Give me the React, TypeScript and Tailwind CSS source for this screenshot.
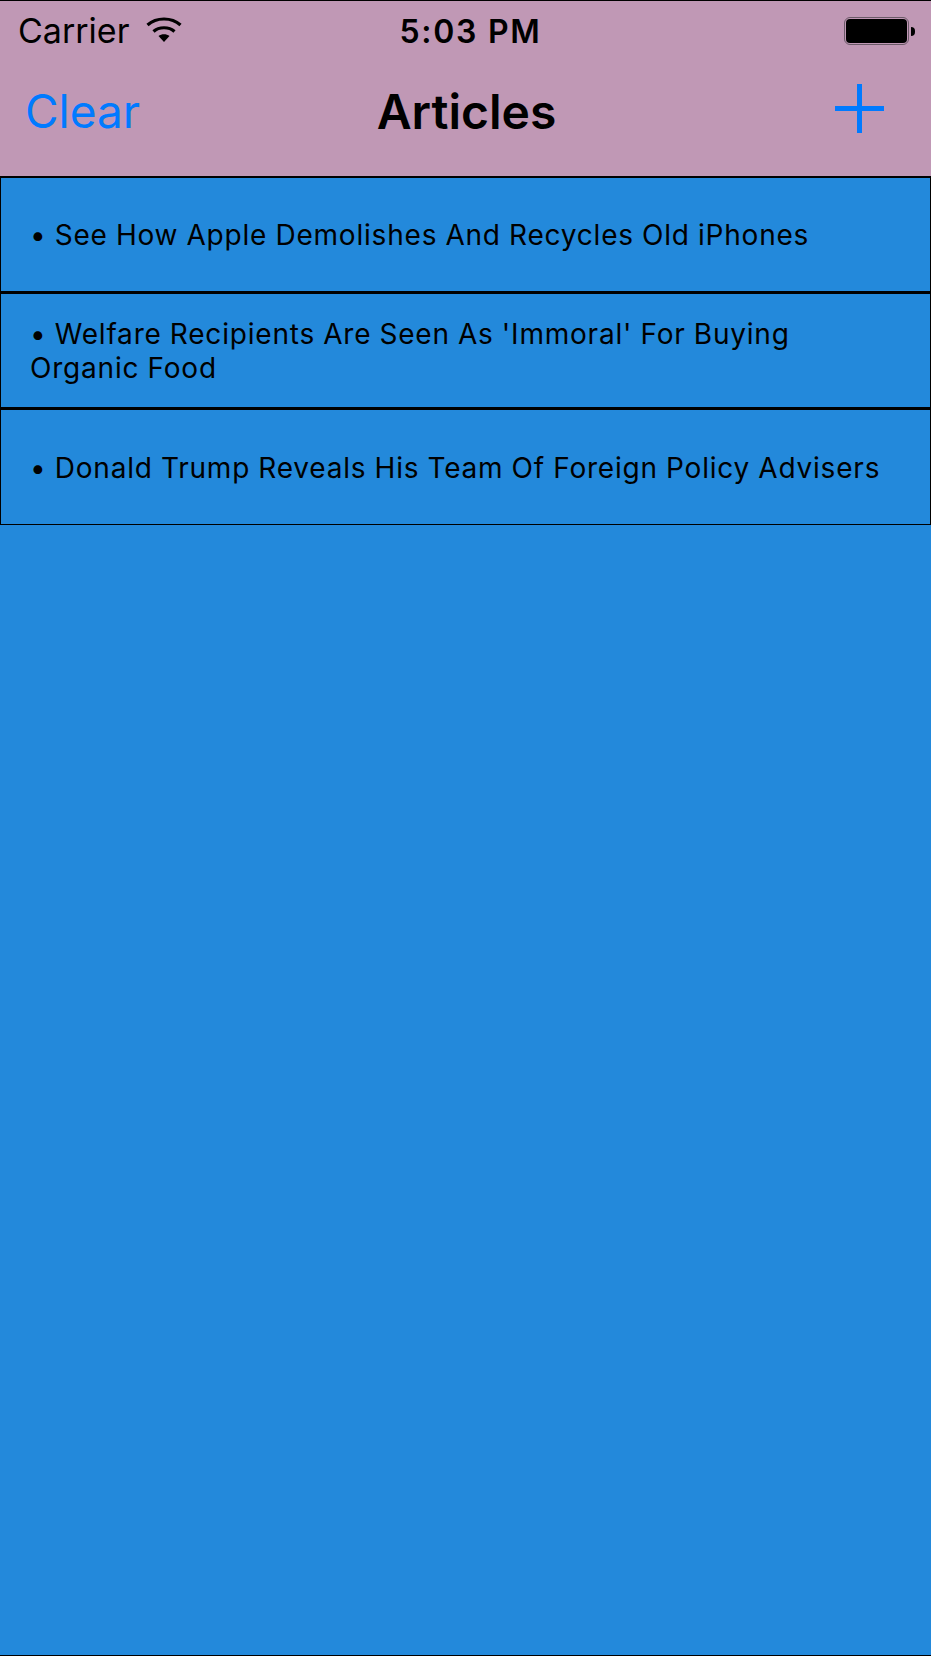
const font = { fontFamily: "Inter, 'Liberation Sans', sans-serif" };

const rows = [
  "See How Apple Demolishes And Recycles Old iPhones",
  "Welfare Recipients Are Seen As 'Immoral' For Buying Organic Food",
  "Donald Trump Reveals His Team Of Foreign Policy Advisers",
];

function Wifi() {
  return (
    <svg width="36" height="28" viewBox="0 0 36 28" fill="none" className="mb-[3px]">
      <path d="M1.5 9C10.5 1 25.5 1 34.5 9" stroke="#000" strokeWidth="3.2" />
      <path d="M7.5 15.5C13 10.5 23 10.5 28.5 15.5" stroke="#000" strokeWidth="3.2" />
      <path d="M12.5 20L18 26L23.5 20C20.5 17.5 15.5 17.5 12.5 20Z" fill="#000" />
    </svg>
  );
}

function Battery() {
  return (
    <div className="flex items-center">
      <div className="w-[65px] h-[28px] rounded-[6px] border border-[#6b5a68] p-[1px]">
        <div className="w-full h-full rounded-[4px] bg-black" />
      </div>
      <div className="w-[4px] h-[9px] ml-[2px] bg-black rounded-r-[4px]" />
    </div>
  );
}

export default function App() {
  return (
    <div className="w-[931px] h-[1656px] bg-[#2389db] border-y border-black flex flex-col text-black" style={font}>
      <header className="h-[176px] bg-[#c098b5] border-b border-black flex flex-col">
        <div className="h-[60px] pl-[18px] pr-[16px] flex items-center justify-between relative">
          <div className="flex items-center gap-[17px] text-[34px] leading-none">
            <span>Carrier</span>
            <Wifi />
          </div>
          <span className="absolute left-0 right-0 pl-[10px] pt-[1px] text-center text-[32px] tracking-[1.7px] font-semibold leading-none">5:03 PM</span>
          <Battery />
        </div>
        <div className="flex-1 pl-[25px] pr-[47px] pb-[16px] flex items-center justify-between relative">
          <span className="text-[46px] leading-none text-[#007aff]">Clear</span>
          <span className="absolute left-0 right-0 pl-[2px] pt-[3px] text-center text-[48px] font-semibold leading-none">Articles</span>
          <svg width="49" height="49" viewBox="0 0 49 49" className="mb-[5px]"><path d="M22 0h5v22h22v5H27v22h-5V27H0v-5h22z" fill="#007aff" /></svg>
        </div>
      </header>
      <main className="flex flex-col">
        {rows.map((t, i) => (
          <div
            key={i}
            className="h-[116px] border border-black border-b-2 last:border-b last:pt-[2px] px-[29px] flex items-center text-[28px] leading-[34px] tracking-[0.8px]"
          >
            <p className="[word-spacing:-0.5px]">{"• " + t}</p>
          </div>
        ))}
      </main>
    </div>
  );
}
